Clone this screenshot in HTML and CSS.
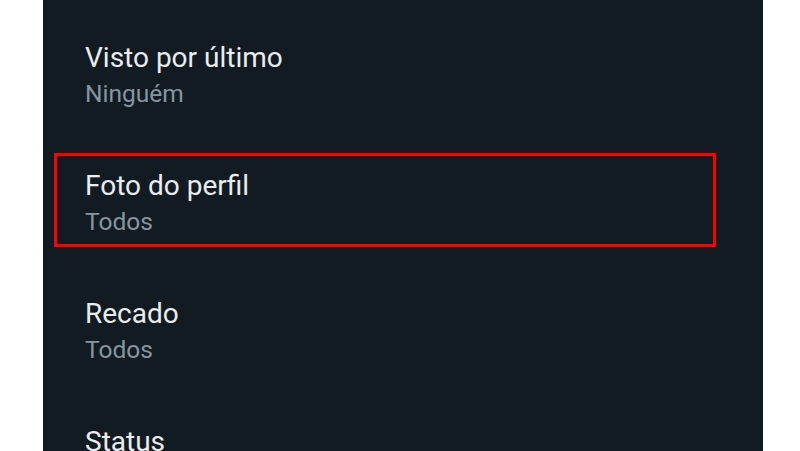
FILE: index.html
```
<!DOCTYPE html>
<html lang="pt">
<head>
    <meta charset="UTF-8">
    <meta name="viewport" content="width=device-width, initial-scale=1.0">
    <title>Privacidade</title>
    <link rel="stylesheet" href="styles.css">
</head>
<body>
    <div class="painel">
        <div class="opcao">
            <div class="titulo">Visto por último</div>
            <div class="valor">Ninguém</div>
        </div>
        <div class="opcao destacada">
            <div class="titulo">Foto do perfil</div>
            <div class="valor">Todos</div>
            <span class="marca"></span>
        </div>
        <div class="opcao">
            <div class="titulo">Recado</div>
            <div class="valor">Todos</div>
        </div>
        <div class="opcao">
            <div class="titulo">Status</div>
        </div>
    </div>
</body>
</html>
```
FILE: styles.css
```
/* Página */
body {
    margin: 0;
    padding: 0;
    background-color: #fff;
    font-family: Roboto, 'Noto Sans', sans-serif;
    height: 451px;
    overflow: hidden;
}

/* Painel escuro */
.painel {
    margin-left: 43px;
    width: 720px;
    height: 451px;
    overflow: hidden;
    background-color: #121b22;
}

/* Cada opção da lista */
.opcao {
    position: relative;
    height: 128px;
    box-sizing: border-box;
    padding: 42px 0 0 42px;
}

.titulo {
    color: #e9edef;
    font-size: 28px;
    line-height: 32px;
}

.valor {
    margin-top: 4px;
    color: #8696a0;
    font-size: 24.5px;
    line-height: 32px;
}

/* Retângulo vermelho de destaque */
.marca {
    position: absolute;
    left: 11px;
    top: 25px;
    width: 662px;
    height: 94px;
    box-sizing: border-box;
    border: 3px solid #f00;
}
```
